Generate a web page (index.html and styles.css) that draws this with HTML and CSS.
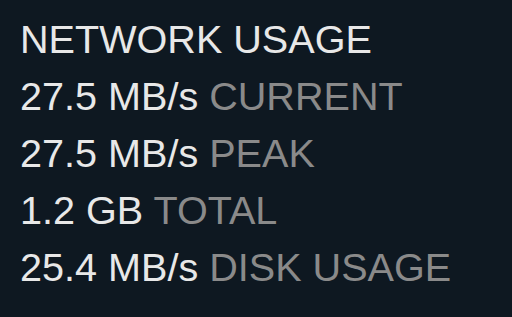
FILE: index.html
```html
<!DOCTYPE html>
<html>
<head>
<meta charset="utf-8">
<link rel="stylesheet" href="styles.css">
</head>
<body>
<div class="panel">
  <div class="title">NETWORK USAGE</div>
  <div class="row"><span class="val">27.5 MB/s</span> <span class="lbl">CURRENT</span></div>
  <div class="row"><span class="val">27.5 MB/s</span> <span class="lbl">PEAK</span></div>
  <div class="row"><span class="val">1.2 GB</span> <span class="lbl">TOTAL</span></div>
  <div class="row"><span class="val">25.4 MB/s</span> <span class="lbl">DISK USAGE</span></div>
</div>
</body>
</html>
```

FILE: styles.css
```css
html, body {
  margin: 0;
  padding: 0;
  background: #0e1821;
  width: 512px;
  height: 317px;
  overflow: hidden;
}
.panel {
  padding: 11px 0 0 20px;
  font-family: "Liberation Sans", Arial, sans-serif;
  font-size: 39.6px;
  line-height: 57px;
  color: #e8e8e8;
  white-space: nowrap;
}
.val { color: #e8e8e8; }
.lbl { color: #8a8a8a; }
```
